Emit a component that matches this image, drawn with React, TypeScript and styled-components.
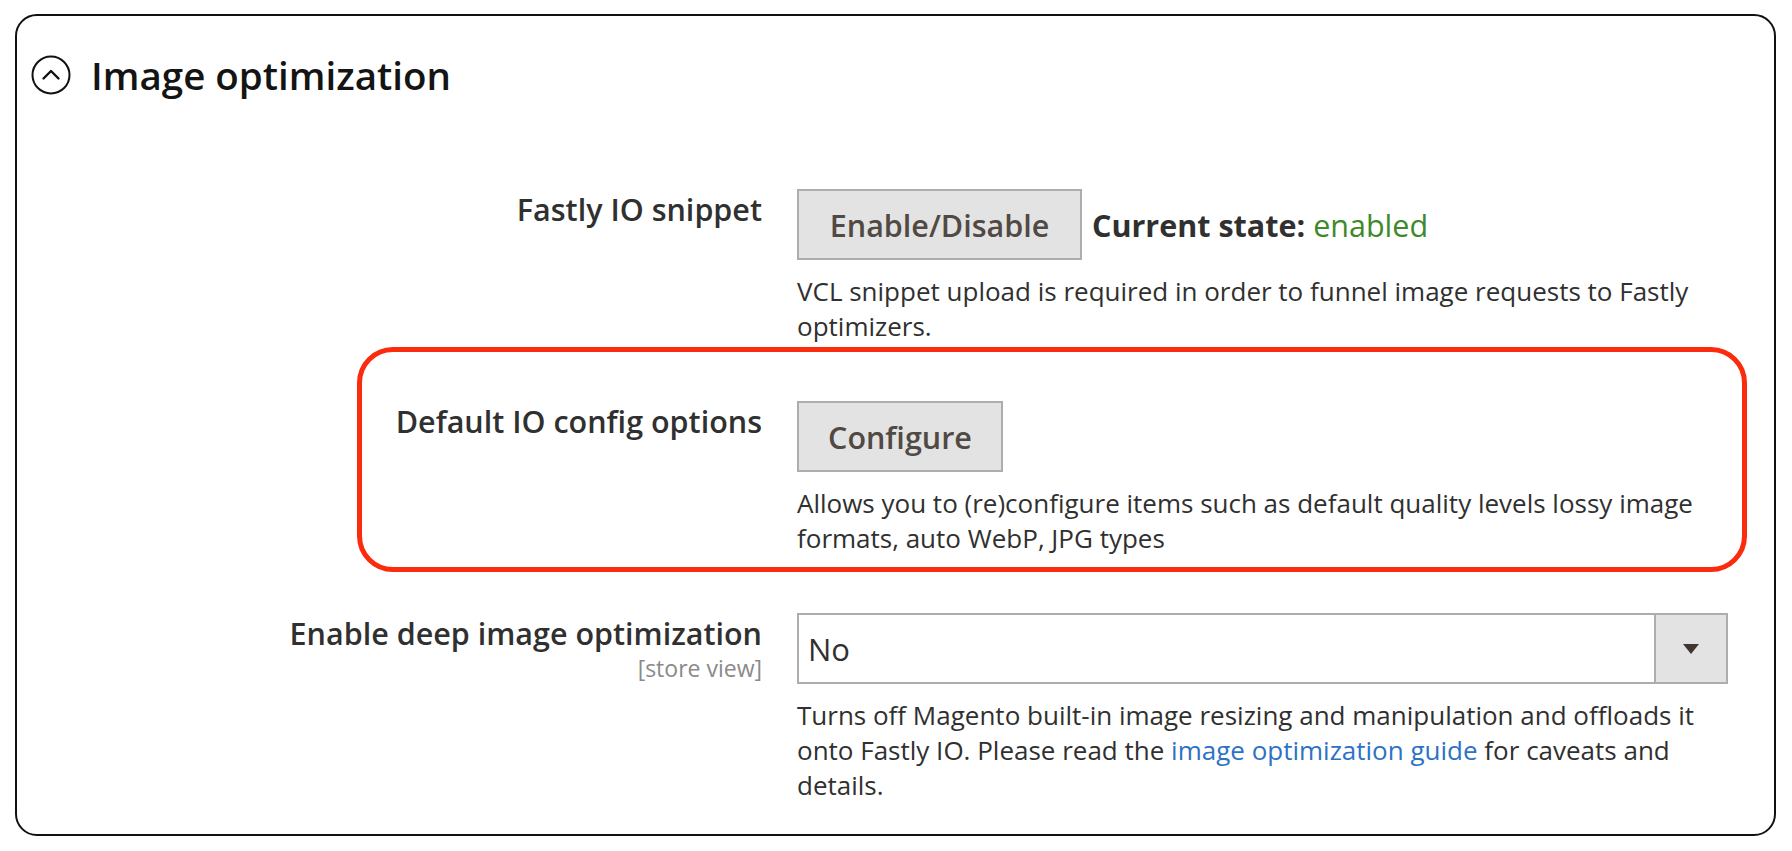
import React from "react";
import styled, { createGlobalStyle } from "styled-components";

const Global = createGlobalStyle`
  html, body { margin: 0; padding: 0; background: #ffffff; }
  body { font-family: "Open Sans", "Noto Sans", sans-serif; color: #303030; }
`;

const Card = styled.section`
  box-sizing: border-box;
  margin: 14px 0 0 15px;
  width: 1761px;
  height: 822px;
  border: 2px solid #111;
  border-radius: 22px;
  padding: 39px 0 0 14px;
`;

const Header = styled.header`
  display: flex;
  align-items: center;
  gap: 20px;
  height: 40px;
`;

const Title = styled.h2`
  margin: 0;
  font-size: 38.5px;
  font-weight: 600;
  color: #141414;
  letter-spacing: 0;
`;

const Rows = styled.div`
  display: flex;
  flex-direction: column;
  gap: 57px;
  margin-top: 94px;
  margin-left: -14px;
`;

const Row = styled.div<{ $highlight?: boolean }>`
  position: relative;
  display: grid;
  grid-template-columns: 745px 931px;
  column-gap: 35px;
  ${(p) =>
    p.$highlight &&
    `
    &::after {
      content: "";
      position: absolute;
      left: 340px;
      top: -54px;
      width: 1390px;
      height: 225px;
      box-sizing: border-box;
      border: 5px solid #fb2b0e;
      border-radius: 36px;
      pointer-events: none;
    }
  `}
`;

const LabelCol = styled.div`
  display: flex;
  flex-direction: column;
  align-items: flex-end;
`;

const Label = styled.span`
  font-size: 30.5px;
  font-weight: 600;
  color: #303030;
  line-height: 40px;
`;

const Scope = styled.span`
  font-size: 23px;
  color: #8a8a8a;
  line-height: 30px;
`;

const Control = styled.div`
  display: flex;
  flex-direction: column;
`;

const Line = styled.div`
  display: flex;
  align-items: center;
  gap: 10px;
`;

const Button = styled.button<{ $w: number }>`
  box-sizing: border-box;
  width: ${(p) => p.$w}px;
  height: 71px;
  background: #e3e3e3;
  border: 2px solid #adadad;
  border-radius: 0;
  font-family: "Open Sans", sans-serif;
  font-size: 30.5px;
  font-weight: 600;
  color: #514943;
  padding: 0;
  cursor: pointer;
`;

const State = styled.span`
  font-size: 30.5px;
  font-weight: 700;
  color: #303030;
  b { font-weight: 400; color: #3e8a2a; }
`;

const Note = styled.p`
  margin: 14px 0 0;
  font-size: 26px;
  line-height: 35px;
  color: #303030;
  a { color: #2d72c4; text-decoration: none; }
`;

const Select = styled.div`
  box-sizing: border-box;
  display: flex;
  width: 931px;
  height: 71px;
  border: 2px solid #adadad;
  background: #fff;
`;

const SelectValue = styled.span`
  flex: 1;
  display: flex;
  align-items: center;
  padding-left: 9px;
  font-size: 31px;
  color: #303030;
`;

const SelectArrow = styled.span`
  width: 70px;
  display: flex;
  align-items: center;
  justify-content: center;
  background: #e3e3e3;
  border-left: 2px solid #adadad;
`;

const CollapseIcon = () => (
  <svg width="40" height="40" viewBox="0 0 40 40" fill="none">
    <circle cx="20" cy="20" r="18.5" stroke="#111" strokeWidth="2" />
    <path d="M12.5 23.5 L20 16 L27.5 23.5" stroke="#111" strokeWidth="2.4" strokeLinecap="round" strokeLinejoin="round" />
  </svg>
);

export default function App() {
  return (
    <>
      <Global />
      <Card>
        <Header>
          <CollapseIcon />
          <Title>Image optimization</Title>
        </Header>
        <Rows>
          <Row>
            <LabelCol>
              <Label>Fastly IO snippet</Label>
            </LabelCol>
            <Control>
              <Line>
                <Button $w={285}>Enable/Disable</Button>
                <State>
                  Current state: <b>enabled</b>
                </State>
              </Line>
              <Note>
                VCL snippet upload is required in order to funnel image requests to Fastly optimizers.
              </Note>
            </Control>
          </Row>
          <Row $highlight>
            <LabelCol>
              <Label>Default IO config options</Label>
            </LabelCol>
            <Control>
              <Line>
                <Button $w={206}>Configure</Button>
              </Line>
              <Note>
                Allows you to (re)configure items such as default quality levels lossy image formats, auto WebP, JPG types
              </Note>
            </Control>
          </Row>
          <Row>
            <LabelCol>
              <Label>Enable deep image optimization</Label>
              <Scope>[store view]</Scope>
            </LabelCol>
            <Control>
              <Select>
                <SelectValue>No</SelectValue>
                <SelectArrow>
                  <svg width="16" height="10" viewBox="0 0 16 10">
                    <path d="M0 0 H16 L8 10 Z" fill="#41362f" />
                  </svg>
                </SelectArrow>
              </Select>
              <Note>
                Turns off Magento built-in image resizing and manipulation and offloads it onto Fastly IO. Please read the{" "}
                <a href="#">image optimization guide</a> for caveats and details.
              </Note>
            </Control>
          </Row>
        </Rows>
      </Card>
    </>
  );
}
